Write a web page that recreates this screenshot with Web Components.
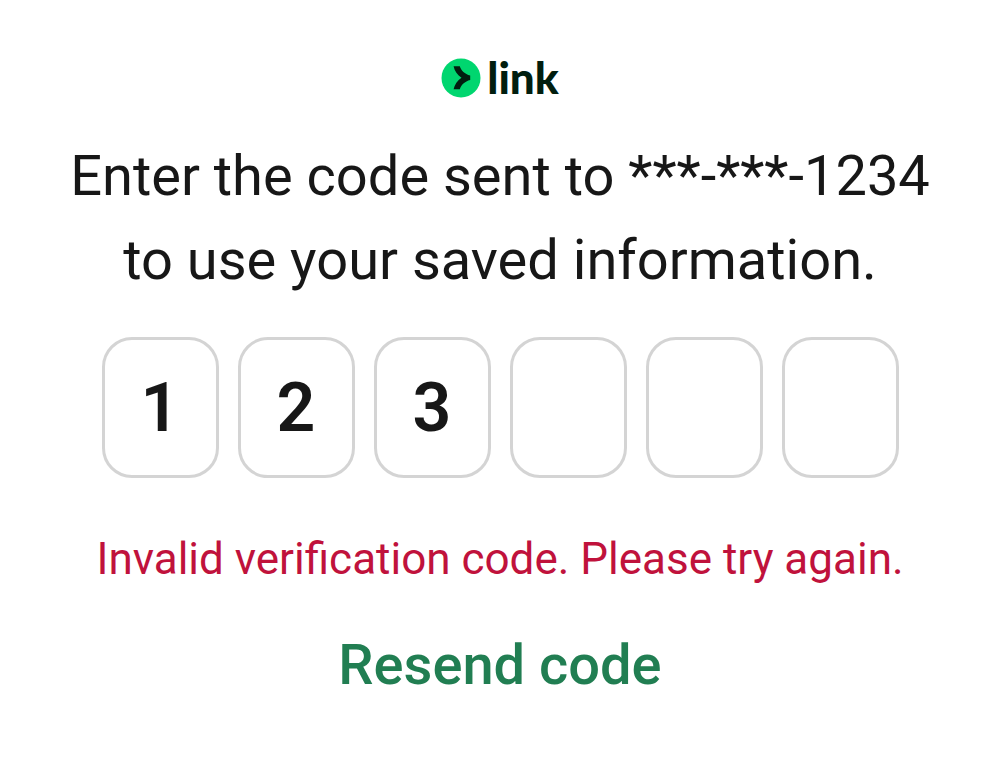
<!DOCTYPE html>
<html lang="en">
<head>
<meta charset="utf-8">
<meta name="viewport" content="width=device-width, initial-scale=1">
<title>Link verification</title>
<style>
body { margin: 0; background: #fff; color: #171717; font-family: Roboto, sans-serif; }
</style>
</head>
<body>
<link-verification>
  <link-logo slot="logo"></link-logo>
  <span slot="prompt">Enter the code sent to ***-***-1234 to use your saved information.</span>
  <code-input slot="code" value="123" length="6"></code-input>
  <span slot="error">Invalid verification code. Please try again.</span>
  <resend-button slot="action">Resend code</resend-button>
</link-verification>
<script>
class LinkLogo extends HTMLElement {
  constructor() {
    super();
    this.attachShadow({ mode: 'open' }).innerHTML = `
      <style>
        :host { display: flex; align-items: center; justify-content: center; gap: 6px; height: 40px; color: #011e0f; }
        svg { display: block; width: 40px; height: 40px; }
        .name { font: 900 44px/38px Lato, sans-serif; height: 40px; }
      </style>
      <svg viewBox="0 0 40 40" aria-hidden="true">
        <circle cx="20" cy="20" r="19.5" fill="#00d66f"/>
        <path d="M12.600 8.200h6.200c1.200 4.200 5 7.900 10.400 9.300v4.500c-5.400 1.400-9.200 5-10.400 9.300h-6.200c.9-4.700 3.900-8.700 7.900-11.550-4-2.850-7-6.850-7.900-11.550z" fill="#011e0f"/>
      </svg>
      <span class="name">link</span>`;
  }
}

class CodeInput extends HTMLElement {
  connectedCallback() {
    const root = this.shadowRoot || this.attachShadow({ mode: 'open' });
    const value = this.getAttribute('value') || '';
    const count = Number(this.getAttribute('length')) || 6;
    const boxes = Array.from({ length: count }, (_, i) =>
      `<input type="text" inputmode="numeric" maxlength="1" aria-label="Digit ${i + 1}" value="${value[i] || ''}">`).join('');
    root.innerHTML = `
      <style>
        :host { display: block; }
        div { display: grid; grid-template-columns: repeat(${count}, minmax(0, 1fr)); gap: 19px; }
        input {
          box-sizing: border-box; width: 100%; height: 141px; margin: 0; padding: 0;
          border: 3px solid #d4d4d4; border-radius: 30px; background: #fff; color: inherit;
          font: 600 68px/84px Roboto, sans-serif; text-align: center;
        }
        input:focus { outline: 3px solid #00d66f; }
      </style>
      <div role="group" aria-label="Verification code">${boxes}</div>`;
    const inputs = [...root.querySelectorAll('input')];
    inputs.forEach((input, i) => {
      input.addEventListener('input', () => {
        if (input.value && inputs[i + 1]) inputs[i + 1].focus();
      });
    });
  }
}

class ResendButton extends HTMLElement {
  constructor() {
    super();
    this.attachShadow({ mode: 'open' }).innerHTML = `
      <style>
        :host { display: block; }
        button { border: 0; padding: 0; background: none; color: #217e52; font: 500 56px/84px Roboto, sans-serif; cursor: pointer; }
      </style>
      <button type="button"><slot></slot></button>`;
  }
}

class LinkVerification extends HTMLElement {
  constructor() {
    super();
    this.attachShadow({ mode: 'open' }).innerHTML = `
      <style>
        :host { display: block; }
        main { display: flex; flex-direction: column; align-items: center; padding: 58px 48px 50px; text-align: center; }
        p { margin: 0; }
        .prompt { margin-top: 36px; max-width: 904px; font-size: 56px; line-height: 84px; }
        .code { width: 100%; max-width: 797px; margin-top: 35px; }
        .error { margin-top: 48px; color: #c0123c; font-size: 44px; line-height: 66px; }
        .action { margin-top: 31px; }
      </style>
      <main>
        <slot name="logo"></slot>
        <p class="prompt"><slot name="prompt"></slot></p>
        <div class="code"><slot name="code"></slot></div>
        <p class="error" role="alert"><slot name="error"></slot></p>
        <div class="action"><slot name="action"></slot></div>
      </main>`;
  }
}

customElements.define('link-logo', LinkLogo);
customElements.define('code-input', CodeInput);
customElements.define('resend-button', ResendButton);
customElements.define('link-verification', LinkVerification);
</script>
</body>
</html>
